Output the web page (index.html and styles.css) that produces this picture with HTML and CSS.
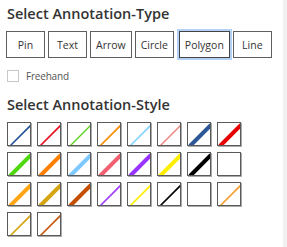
FILE: index.html
```html
<!DOCTYPE html>
<html lang="en">
<head>
  <meta charset="UTF-8">
  <meta name="viewport" content="width=device-width, initial-scale=1">
  <title>Annotation Settings</title>
  <link rel="stylesheet" href="styles.css">
</head>
<body>

<div class="panel">
  <h3 class="section-title">Select Annotation-Type</h3>
  <div class="type-buttons">
    <button class="type-btn">Pin</button>
    <button class="type-btn">Text</button>
    <button class="type-btn">Arrow</button>
    <button class="type-btn">Circle</button>
    <button class="type-btn active">Polygon</button>
    <button class="type-btn">Line</button>
  </div>

  <label class="freehand">
    <span class="check-box"></span>
    <span class="check-label">Freehand</span>
  </label>

  <h3 class="section-title">Select Annotation-Style</h3>
  <div class="style-grid" id="styleGrid">
    <!-- swatches are added by the script below -->
  </div>
</div>
<div class="edge"></div>

<script>
  // [colour, stroke width] - null colour means an empty swatch
  const styles = [
    ['#2b5797', 1.6], ['#e81123', 1.6], ['#5fd21e', 1.4], ['#ff8c00', 1.6],
    ['#8ad2ff', 1.6], ['#f28080', 1.4], ['#2b5797', 4], ['#e60000', 4],
    ['#4fd80f', 4], ['#ff7f00', 4], ['#7cc8ff', 4], ['#f06070', 4],
    ['#9933ff', 4], ['#ffee00', 4], ['#000000', 4], [null, 0],
    ['#ffa516', 4], ['#d4a414', 4], ['#c44f00', 4], ['#a040ff', 1.6],
    ['#ffee00', 1.6], ['#000000', 1.6], [null, 0], ['#f5a030', 1.6],
    ['#d4a414', 1.6], ['#c45a10', 1.6]
  ];

  const grid = document.getElementById('styleGrid');

  styles.forEach(([color, width]) => {
    const swatch = document.createElement('div');
    swatch.className = 'swatch';
    if (color) {
      swatch.innerHTML = `
        <svg viewBox="0 0 22 22" width="22" height="22">
          <line x1="2" y1="23" x2="23" y2="2" stroke="${color}" stroke-width="${width}" />
        </svg>`;
    }
    grid.appendChild(swatch);
  });
</script>

</body>
</html>
```

FILE: styles.css
```css
html, body {
  margin: 0;
  height: 100%;
}
body {
  font-family: "Open Sans", "Noto Sans", sans-serif;
  background: #fff;
  color: #333;
  display: flex;
}
.panel {
  flex: 1;
  padding: 4px 6px;
}
.edge {
  width: 4px;
  background: #f1f1f1;
}
.section-title {
  font-size: 14.5px;
  font-weight: 600;
  margin: 0 0 0 1px;
  line-height: 19px;
}
.type-buttons {
  display: flex;
  gap: 3px;
  margin-top: 8px;
}
.type-btn {
  height: 27px;
  min-width: 39px;
  padding: 0 5px;
  font-family: inherit;
  font-size: 10.5px;
  color: #333;
  background: #fff;
  border: 1px solid #5f5f5f;
  border-radius: 0;
}
.type-btn.active {
  outline: 2px solid #b3d0f5;
  margin-left: 2px;
  border-color: #444;
}
.freehand {
  display: flex;
  align-items: center;
  gap: 7px;
  margin: 12px 0 0 1px;
  height: 12px;
}
.check-box {
  width: 10px;
  height: 10px;
  border: 1px solid #c8c8c8;
}
.check-label {
  font-size: 10px;
  letter-spacing: -0.2px;
  color: #555;
}
.freehand + .section-title {
  margin-top: 13px;
}
.style-grid {
  display: grid;
  grid-template-columns: repeat(8, 24px);
  gap: 6px;
  margin: 8px 0 0 1px;
}
.swatch {
  width: 22px;
  height: 22px;
  border: 1px solid #5a5a5a;
  box-shadow: 1px 1px 0 #aaa;
  overflow: hidden;
}
.swatch svg {
  display: block;
}
```
